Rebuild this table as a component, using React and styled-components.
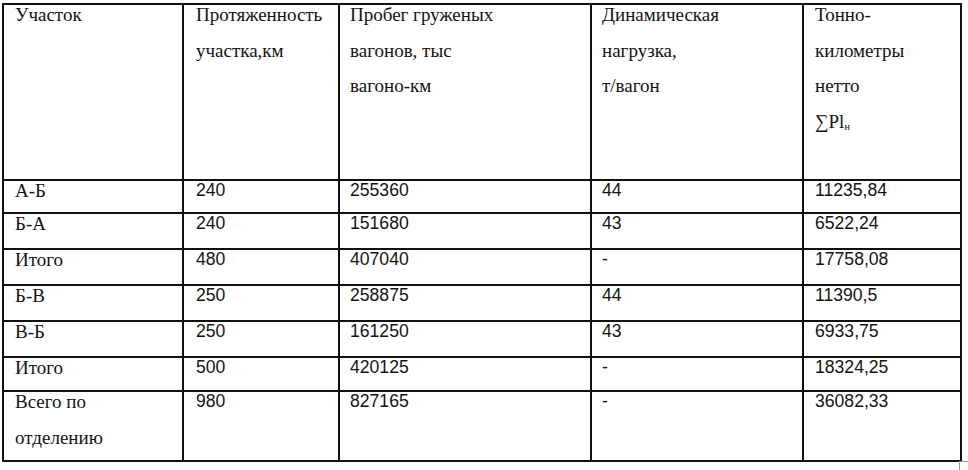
import React from "react";
import styled, { createGlobalStyle } from "styled-components";

const Global = createGlobalStyle`
  html, body { margin: 0; padding: 0; background: #fff; }
  body { width: 968px; height: 470px; overflow: hidden; }
`;

const Page = styled.div`
  padding: 3px 0 0 2px;
`;

const Frame = styled.div`
  position: relative;
  width: 958px;
  &::after {
    content: "";
    position: absolute;
    right: -9px;
    bottom: -9px;
    width: 9px;
    height: 9px;
    border-top: 1px solid #9a9a9a;
    border-left: 1px solid #9a9a9a;
  }
`;

const Table = styled.table`
  border-collapse: collapse;
  table-layout: fixed;
  width: 958px;
  color: #141414;
`;

const Row = styled.tr`
  height: ${(p) => p.$h}px;
`;

const Cell = styled.td`
  border: 2px solid #111;
  padding: 0 6px 0 ${(p) => p.$pl || 10}px;
  vertical-align: top;
  line-height: 35.5px;
  font-family: ${(p) =>
    p.$num
      ? '"Liberation Sans", Arial, sans-serif'
      : '"Liberation Serif", "Times New Roman", serif'};
  font-size: ${(p) => (p.$num ? "17.6px" : "19px")};
  white-space: nowrap;
  overflow: hidden;
`;

const Inner = styled.div`
  margin-top: -8px;
`;

const Sub = styled.sub`
  font-size: 10px;
  vertical-align: -2px;
  line-height: 0;
`;

const cols = [180, 156, 252, 212, 158];
const pads = [11, 12, 10, 10, 11];

const header = [
  ["Участок"],
  ["Протяженность", "участка,км"],
  ["Пробег груженых", "вагонов, тыс", "вагоно-км"],
  ["Динамическая", "нагрузка,", "т/вагон"],
  ["Тонно-", "километры", "нетто", "sum"],
];

const rows = [
  { h: 33, c: [["А-Б"], "240", "255360", "44", "11235,84"] },
  { h: 36, c: [["Б-А"], "240", "151680", "43", "6522,24"] },
  { h: 36, c: [["Итого"], "480", "407040", "-", "17758,08"] },
  { h: 36, c: [["Б-В"], "250", "258875", "44", "11390,5"] },
  { h: 36, c: [["В-Б"], "250", "161250", "43", "6933,75"] },
  { h: 34, c: [["Итого"], "500", "420125", "-", "18324,25"] },
  { h: 70, c: [["Всего по", "отделению"], "980", "827165", "-", "36082,33"] },
];

export default function App() {
  return (
    <Page>
      <Global />
      <Frame>
        <Table>
          <colgroup>
            {cols.map((w, i) => (
              <col key={i} style={{ width: w }} />
            ))}
          </colgroup>
          <tbody>
            <Row $h={176}>
              {header.map((lines, i) => (
                <Cell key={i} $pl={pads[i]}>
                  <Inner>
                    {lines.map((l, j) => (
                      <div key={j}>
                        {l === "sum" ? (
                          <>
                            ∑Pl<Sub>н</Sub>
                          </>
                        ) : (
                          l
                        )}
                      </div>
                    ))}
                  </Inner>
                </Cell>
              ))}
            </Row>
            {rows.map((r, i) => (
              <Row key={i} $h={r.h}>
                {r.c.map((v, j) => (
                  <Cell key={j} $pl={pads[j]} $num={j > 0}>
                    <Inner>
                      {Array.isArray(v) ? v.map((l, k) => <div key={k}>{l}</div>) : v}
                    </Inner>
                  </Cell>
                ))}
              </Row>
            ))}
          </tbody>
        </Table>
      </Frame>
    </Page>
  );
}
